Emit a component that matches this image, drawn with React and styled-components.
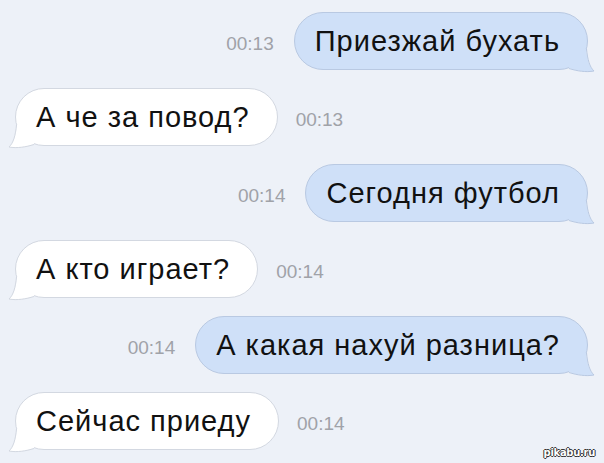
import React from "react";
import styled, { createGlobalStyle } from "styled-components";

const GlobalStyle = createGlobalStyle`
  html, body {
    margin: 0;
    padding: 0;
    background: #edf1f8;
  }
  body {
    font-family: "Liberation Sans", Arial, Helvetica, sans-serif;
  }
`;

const Screen = styled.div`
  position: relative;
  width: 604px;
  height: 463px;
  overflow: hidden;
  background: #edf1f8;
  display: flex;
  flex-direction: column;
  gap: 18px;
  padding: 12px 16px 0 15px;
  box-sizing: border-box;
`;

const Row = styled.div`
  display: flex;
  align-items: flex-end;
  justify-content: flex-start;
  flex-direction: ${(p) => (p.$out ? "row-reverse" : "row")};
  gap: ${(p) => (p.$out ? "20px" : "18px")};
`;

const Bubble = styled.div`
  position: relative;
  box-sizing: border-box;
  height: 58px;
  display: flex;
  align-items: center;
  padding: 0 27px 0 20px;
  border-radius: 29px;
  background: ${(p) => (p.$out ? "#cfe0f8" : "#ffffff")};
  border: 1px solid ${(p) => (p.$out ? "#b9c9e2" : "#d3d8e1")};
  color: #111;
  font-size: 29px;
  letter-spacing: 1px;
  white-space: nowrap;
`;

const Tail = styled.svg`
  position: absolute;
  bottom: -4px;
  ${(p) => (p.$out ? "right: -8px;" : "left: -8px; transform: scaleX(-1);")}
  width: 40px;
  height: 30px;
  overflow: visible;
`;

const Time = styled.span`
  font-size: 19px;
  color: #a0a2a8;
  padding-bottom: 15px;
  white-space: nowrap;
`;

const Watermark = styled.div`
  position: absolute;
  right: 9px;
  bottom: 5px;
  font-family: "DejaVu Sans", sans-serif;
  font-size: 10px;
  font-weight: bold;
  color: #fff;
  letter-spacing: -0.3px;
  text-shadow: 1px 0 0 #333, -1px 0 0 #333, 0 1px 0 #333, 0 -1px 0 #333;
`;

const messages = [
  { out: true, text: "Приезжай бухать", time: "00:13" },
  { out: false, text: "А че за повод?", time: "00:13" },
  { out: true, text: "Сегодня футбол", time: "00:14" },
  { out: false, text: "А кто играет?", time: "00:14" },
  { out: true, text: "А какая нахуй разница?", time: "00:14" },
  { out: false, text: "Сейчас приеду", time: "00:14" },
];

function BubbleTail({ out }) {
  const fill = out ? "#cfe0f8" : "#ffffff";
  const stroke = out ? "#b9c9e2" : "#d3d8e1";
  return (
    <Tail $out={out} viewBox="0 0 40 30">
      <path d="M31 6 C32 16 34 24 39 28 C31 29.5 22 28 14 25 L14 6 Z" fill={fill} />
      <path
        d="M31.5 6 C32.5 16 34.5 24 39 28 C31 29.5 22 28 14 25.5"
        fill="none"
        stroke={stroke}
        strokeWidth="1"
      />
    </Tail>
  );
}

export default function App() {
  return (
    <>
      <GlobalStyle />
      <Screen>
        {messages.map((m, i) => (
          <Row key={i} $out={m.out}>
            <Bubble $out={m.out}>
              {m.text}
              <BubbleTail out={m.out} />
            </Bubble>
            <Time>{m.time}</Time>
          </Row>
        ))}
        <Watermark>pikabu.ru</Watermark>
      </Screen>
    </>
  );
}
